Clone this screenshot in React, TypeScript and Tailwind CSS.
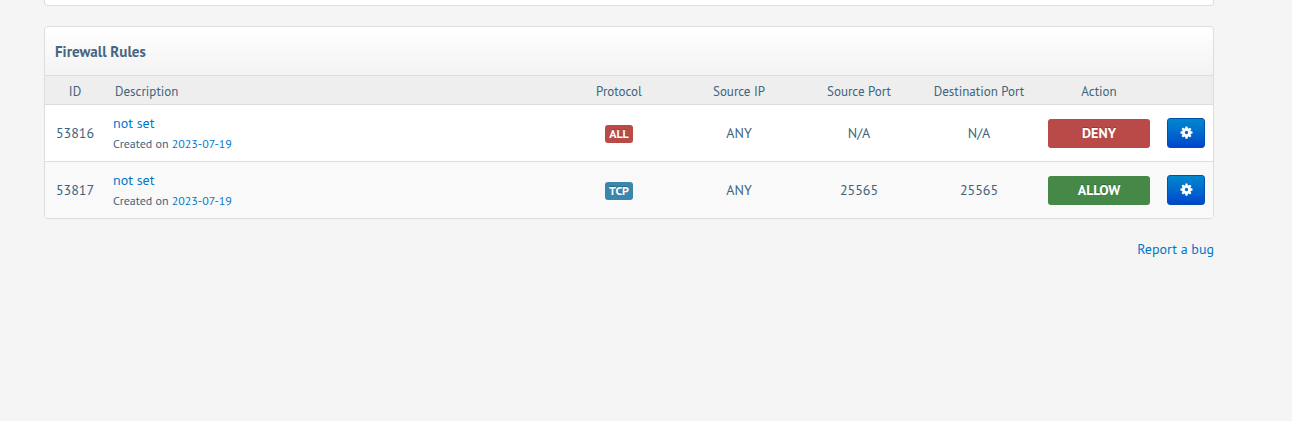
const cols = "grid grid-cols-[60px_454px_120px_120px_120px_120px_120px_54px] items-center";

function Gear() {
  return (
    <svg width="13" height="13" viewBox="0 0 14 14" aria-hidden="true">
      <path
        fill="#fff"
        fillRule="evenodd"
        d="M5.9 .6h2.2l.3 1.8c.3.1.6.2.9.4l1.5-1 1.500 1.500-1 1.500c.2.3.3.6.4.9l1.800.3v2.200l-1.800.3c-.1.3-.2.6-.4.9l1 1.500-1.500 1.500-1.500-1c-.3.2-.6.3-.9.4l-.3 1.800H5.900l-.3-1.800c-.3-.1-.6-.2-.9-.4l-1.500 1-1.500-1.500 1-1.500c-.2-.3-.3-.6-.4-.9L.5 8.100V5.900l1.800-.3c.1-.3.2-.6.4-.9l-1-1.500 1.500-1.500 1.500 1c.3-.2.6-.3.9-.4zM7 5.200a1.800 1.800 0 1 0 0 3.600 1.800 1.800 0 0 0 0-3.600z"
      />
    </svg>
  );
}

function Row({ id, proto, protoBg, sip, sport, dport, action, actionBg, bg, last }: { id: string; proto: string; protoBg: string; sip: string; sport: string; dport: string; action: string; actionBg: string; bg: string; last?: boolean }) {
  return (
    <div className={`${cols} ${bg} ${last ? "h-[56px] rounded-b-[3px]" : "border-b border-[#dddddd] h-[57px]"}`}>
      <div className="text-center text-[14px]">{id}</div>
      <div className="pl-2">
        <a className="block text-[14px] leading-[19px] text-[#0077c8]">not set</a>
        <div className="text-[12px] leading-[16px] mt-[3px]">
          Created on <a className="text-[#0077c8]">2023-07-19</a>
        </div>
      </div>
      <div className="flex justify-center pt-[1px]">
        <span className={`rounded-[3px] w-[28px] text-center h-[18px] leading-[18px] text-[12px] font-bold text-white [text-shadow:0_-1px_0_rgba(0,0,0,0.25)] ${protoBg}`}>{proto}</span>
      </div>
      <div className="text-center text-[14px]">{sip}</div>
      <div className="text-center text-[14px]">{sport}</div>
      <div className="text-center text-[14px]">{dport}</div>
      <div className="flex justify-center">
        <button className={`w-[102px] h-[29px] rounded-[3px] text-white text-[14px] leading-[29px] font-bold [text-shadow:0_-1px_0_rgba(0,0,0,0.25)] ${actionBg}`}>{action}</button>
      </div>
      <div className="flex pl-[8px]">
        <button className="w-[38px] h-[30px] -mt-[1px] rounded-[3px] flex items-center justify-center bg-gradient-to-b from-[#0088cc] to-[#0044cc] border border-[#0050b0]">
          <Gear />
        </button>
      </div>
    </div>
  );
}

export default function App() {
  return (
    <div className="min-h-[421px] bg-[#f5f5f5] px-[44px] text-[#40637c] font-['PT_Sans','Noto_Sans','Open_Sans',sans-serif]">
      <div className="w-[1170px]">
        <div className="h-[6px] bg-white border border-t-0 border-[#dddddd] rounded-b-[4px]" />
        <div className="mt-[20px] bg-white border border-[#dddddd] rounded-[4px]">
          <div className="h-[49px] border-b border-[#dddddd] rounded-t-[4px] bg-gradient-to-b from-white to-[#f3f3f3] flex items-center pl-[10px] pt-[2px]">
            <h3 className="text-[15px] font-bold text-[#466680]">Firewall Rules</h3>
          </div>
          <div className={`${cols} h-[29px] pt-[3px] bg-[#eeeeee] border-b border-[#dddddd] text-[13px]`}>
            <div className="text-center">ID</div>
            <div className="pl-[10px]">Description</div>
            <div className="text-center">Protocol</div>
            <div className="text-center">Source IP</div>
            <div className="text-center">Source Port</div>
            <div className="text-center">Destination Port</div>
            <div className="text-center">Action</div>
            <div />
          </div>
          <Row id="53816" proto="ALL" protoBg="bg-[#b94a48]" sip="ANY" sport="N/A" dport="N/A" action="DENY" actionBg="bg-[#b94a48]" bg="bg-white" />
          <Row id="53817" proto="TCP" protoBg="bg-[#3a87ad]" sip="ANY" sport="25565" dport="25565" action="ALLOW" actionBg="bg-[#468847]" bg="bg-[#f9f9f9]" last />
        </div>
        <div className="mt-[20px] text-right text-[14px] leading-[20px] text-[#0077c8]">Report a bug</div>
      </div>
    </div>
  );
}
